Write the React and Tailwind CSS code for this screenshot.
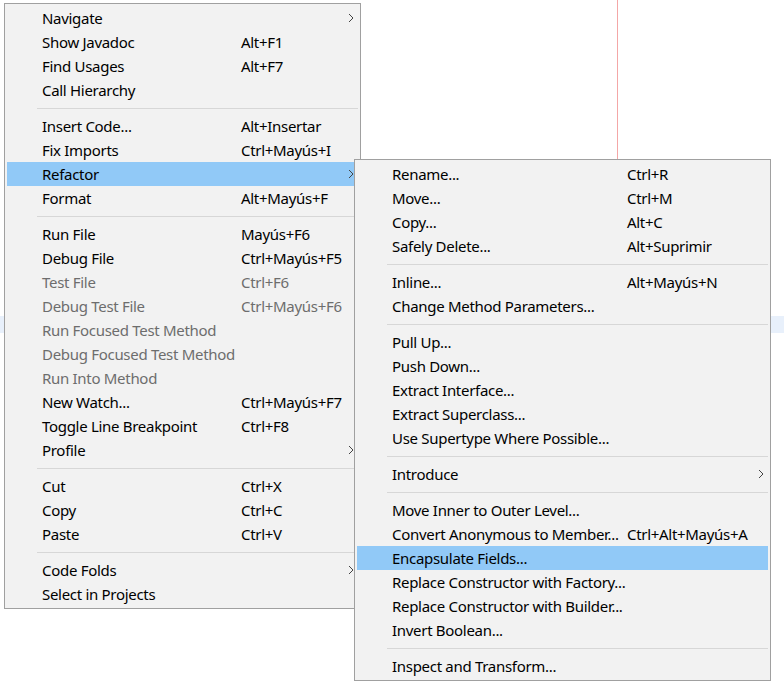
import React from 'react';

const mainItems = [
  { label: 'Navigate', sub: true },
  { label: 'Show Javadoc', key: 'Alt+F1' },
  { label: 'Find Usages', key: 'Alt+F7' },
  { label: 'Call Hierarchy' },
  'sep',
  { label: 'Insert Code...', key: 'Alt+Insertar' },
  { label: 'Fix Imports', key: 'Ctrl+Mayús+I' },
  { label: 'Refactor', sub: true, active: true },
  { label: 'Format', key: 'Alt+Mayús+F' },
  'sep',
  { label: 'Run File', key: 'Mayús+F6' },
  { label: 'Debug File', key: 'Ctrl+Mayús+F5' },
  { label: 'Test File', key: 'Ctrl+F6', disabled: true },
  { label: 'Debug Test File', key: 'Ctrl+Mayús+F6', disabled: true },
  { label: 'Run Focused Test Method', disabled: true },
  { label: 'Debug Focused Test Method', disabled: true },
  { label: 'Run Into Method', disabled: true },
  { label: 'New Watch...', key: 'Ctrl+Mayús+F7' },
  { label: 'Toggle Line Breakpoint', key: 'Ctrl+F8' },
  { label: 'Profile', sub: true },
  'sep',
  { label: 'Cut', key: 'Ctrl+X' },
  { label: 'Copy', key: 'Ctrl+C' },
  { label: 'Paste', key: 'Ctrl+V' },
  'sep',
  { label: 'Code Folds', sub: true },
  { label: 'Select in Projects' },
];

const refactorItems = [
  { label: 'Rename...', key: 'Ctrl+R' },
  { label: 'Move...', key: 'Ctrl+M' },
  { label: 'Copy...', key: 'Alt+C' },
  { label: 'Safely Delete...', key: 'Alt+Suprimir' },
  'sep',
  { label: 'Inline...', key: 'Alt+Mayús+N' },
  { label: 'Change Method Parameters...' },
  'sep',
  { label: 'Pull Up...' },
  { label: 'Push Down...' },
  { label: 'Extract Interface...' },
  { label: 'Extract Superclass...' },
  { label: 'Use Supertype Where Possible...' },
  'sep',
  { label: 'Introduce', sub: true },
  'sep',
  { label: 'Move Inner to Outer Level...' },
  { label: 'Convert Anonymous to Member...', key: 'Ctrl+Alt+Mayús+A' },
  { label: 'Encapsulate Fields...', active: true },
  { label: 'Replace Constructor with Factory...' },
  { label: 'Replace Constructor with Builder...' },
  { label: 'Invert Boolean...' },
  'sep',
  { label: 'Inspect and Transform...' },
];

function Chevron() {
  return (
    <svg width="6" height="10" viewBox="0 0 6 10" className="ml-auto mr-[4px] shrink-0">
      <path d="M1 1 L5 5 L1 9" fill="none" stroke="#444" strokeWidth="1" />
    </svg>
  );
}

function Menu({ items, labelW, className }) {
  return (
    <div className={`absolute bg-[#f2f2f2] border border-[#a0a0a0] p-[2px] font-['Noto_Sans',sans-serif] text-[15px] tracking-[-0.3px] ${className}`}>
      {items.map((it, i) =>
        it === 'sep' ? (
          <div key={i} className="h-[12px] flex items-center pl-[30px]">
            <div className="h-px w-full bg-[#d7d7d7]" />
          </div>
        ) : (
          <div
            key={i}
            className={`h-[24px] flex items-center whitespace-nowrap pl-[35px] ${it.active ? 'bg-[#91c9f7]' : ''} ${it.disabled ? 'text-[#6d6d6d]' : 'text-black'}`}
          >
            <span className={`${labelW} shrink-0`}>{it.label}</span>
            {it.key && <span>{it.key}</span>}
            {it.sub && <Chevron />}
          </div>
        )
      )}
    </div>
  );
}

export default function App() {
  return (
    <div className="relative w-[784px] h-[694px] bg-white overflow-hidden">
      {/* editor behind the popup */}
      <div className="flex flex-col">
        <div className="ml-[617px] w-px h-[160px] bg-[#f4a7a7]" />
        <div className="mt-[156px] h-[17px] bg-[#e8f0fb]" />
      </div>

      <Menu items={mainItems} labelW="w-[199px]" className="left-[4px] top-[3px] w-[357px]" />
      <Menu items={refactorItems} labelW="w-[235px]" className="left-[354px] top-[159px] w-[417px]" />
    </div>
  );
}
